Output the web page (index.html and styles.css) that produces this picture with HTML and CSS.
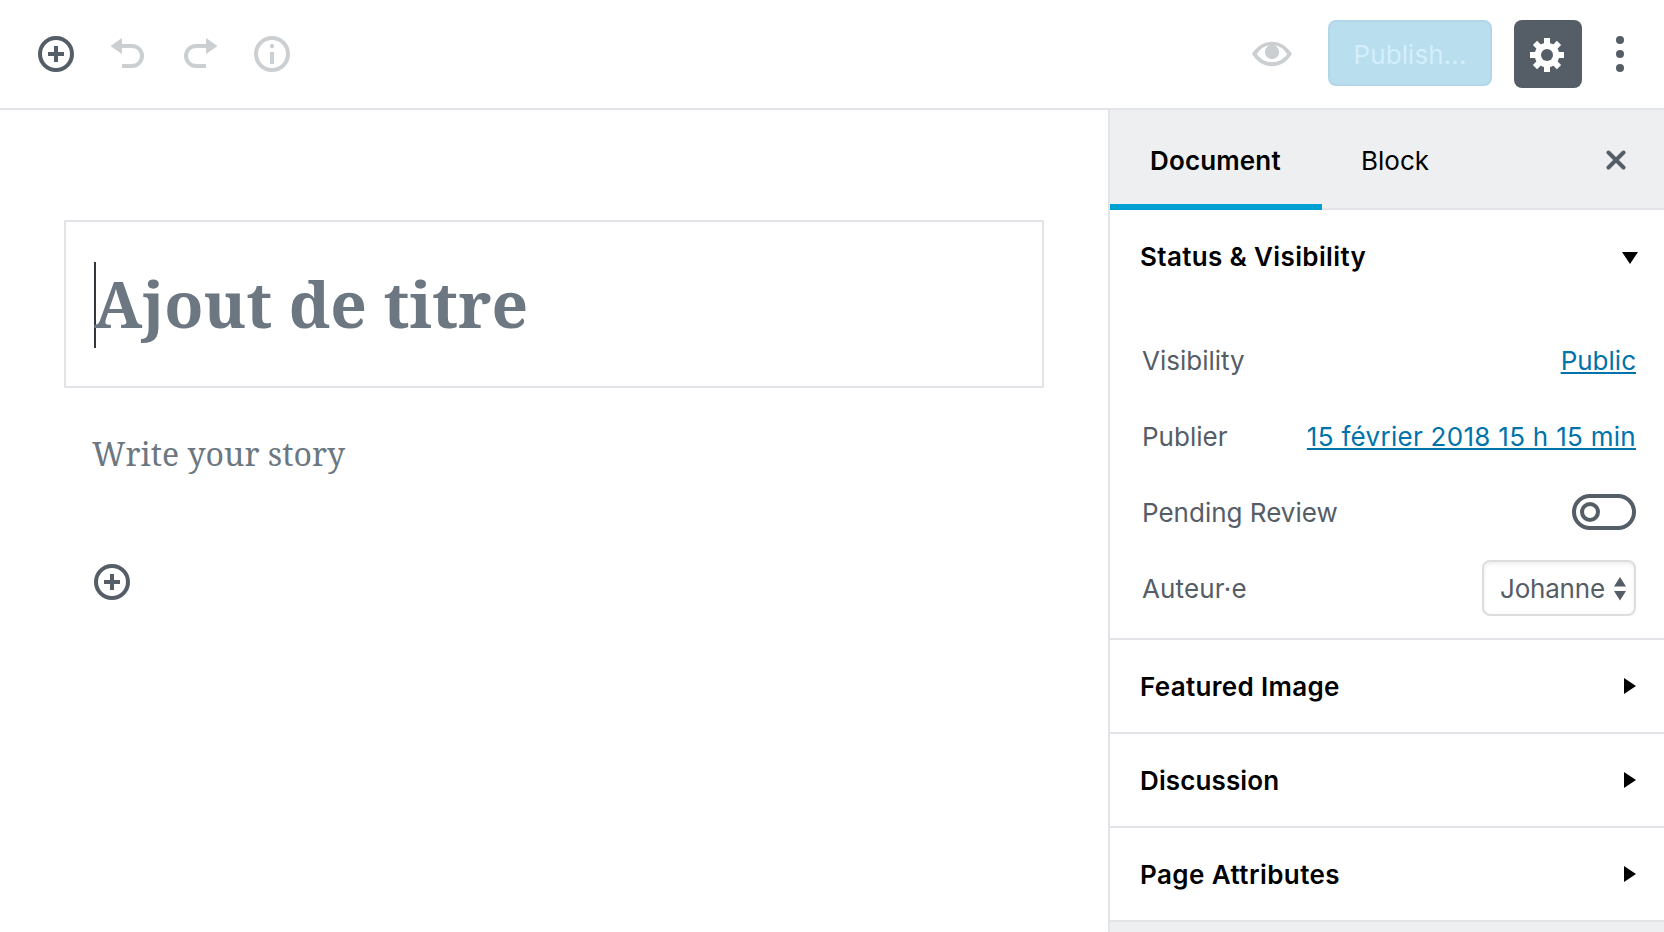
FILE: index.html
```html
<!DOCTYPE html>
<html lang="fr">
<head>
<meta charset="utf-8">
<title>Editor</title>
<link rel="stylesheet" href="styles.css">
</head>
<body>
<header class="header">
  <div class="tools">
    <svg class="icon dark" viewBox="0 0 40 40"><circle cx="20" cy="20" r="16" fill="none" stroke="currentColor" stroke-width="4"/><path d="M12 20h16M20 12v16" stroke="currentColor" stroke-width="4"/></svg>
    <svg class="icon" viewBox="0 0 40 40"><path d="M2.500 12L14 4v16z" fill="currentColor"/><path d="M13 12h11a10 10 0 0 1 0 20H14" fill="none" stroke="currentColor" stroke-width="4"/></svg>
    <svg class="icon" viewBox="0 0 40 40"><path d="M37.500 12L26 4v16z" fill="currentColor"/><path d="M27 12H16a10 10 0 0 0 0 20h10" fill="none" stroke="currentColor" stroke-width="4"/></svg>
    <svg class="icon" viewBox="0 0 40 40"><circle cx="20" cy="20" r="16" fill="none" stroke="currentColor" stroke-width="4"/><circle cx="20" cy="12" r="2.200" fill="currentColor"/><path d="M20 18v12" stroke="currentColor" stroke-width="4"/></svg>
  </div>
  <div class="actions">
    <svg class="icon" viewBox="0 0 40 40"><path fill="currentColor" fill-rule="evenodd" d="M0 20C10 3.700 30 3.700 40 20C30 36.300 10 36.300 0 20zM4.800 20C12 31 28 31 35.200 20C32 15.500 29 13 25 11.800H15C11 13 8 15.500 4.800 20z"/><circle cx="20" cy="18" r="7.200" fill="currentColor"/></svg>
    <button class="publish"><span class="t-publish">Publish...</span></button>
    <button class="settings"><svg class="gear" viewBox="-17 -17 34 34"><g fill="#fff"><path d="M-3-17h6v34h-6z"/><path d="M-3-17h6v34h-6z" transform="rotate(45)"/><path d="M-3-17h6v34h-6z" transform="rotate(90)"/><path d="M-3-17h6v34h-6z" transform="rotate(135)"/><circle r="12.300"/></g><circle r="6" fill="#555d66"/></svg></button>
    <svg class="more" viewBox="0 0 8 36"><circle cx="4" cy="4" r="4"/><circle cx="4" cy="18" r="4"/><circle cx="4" cy="32" r="4"/></svg>
  </div>
</header>
<div class="main">
  <main class="editor">
    <div class="title-box"><span class="caret"></span><h1 class="title">Ajout de titre</h1></div>
    <p class="story"><span class="t-story">Write your story</span></p>
    <svg class="icon dark inserter" viewBox="0 0 40 40"><circle cx="20" cy="20" r="16" fill="none" stroke="currentColor" stroke-width="4"/><path d="M12 20h16M20 12v16" stroke="currentColor" stroke-width="4"/></svg>
  </main>
  <aside class="sidebar">
    <nav class="tabs">
      <div class="tab active"><span class="t-document">Document</span></div>
      <div class="tab"><span class="t-block">Block</span></div>
      <svg class="close" viewBox="0 0 20 20"><path d="M2.500 2.500l15 15M17.500 2.500l-15 15" stroke="#555d66" stroke-width="4" stroke-linecap="round"/></svg>
    </nav>
    <section class="panel status">
      <h2 class="heading"><span class="t-status">Status &amp; Visibility</span><svg class="tri-down" viewBox="0 0 16 12"><path d="M0 0h16L8 12z"/></svg></h2>
      <div class="rows">
        <div class="row"><span class="t-visibility">Visibility</span><a class="link t-public">Public</a></div>
        <div class="row"><span class="t-publier">Publier</span><a class="link t-date">15 février 2018 15 h 15 min</a></div>
        <div class="row"><span class="t-pending">Pending Review</span><svg class="toggle" viewBox="0 0 64 36"><g fill="none" stroke="#555d66" stroke-width="4"><rect x="2" y="2" width="60" height="32" rx="16"/><circle cx="18" cy="18" r="8"/></g></svg></div>
        <div class="row"><span class="t-auteur">Auteur·e</span><div class="select"><span class="t-johanne">Johanne</span><svg class="updown" viewBox="0 0 12 24"><path d="M0 9.500h12L6 0zM0 14h12l-6 9.500z"/></svg></div></div>
      </div>
    </section>
    <section class="panel"><h2 class="heading"><span class="t-featured">Featured Image</span><svg class="tri-right" viewBox="0 0 12 16"><path d="M0 0v16l12-8z"/></svg></h2></section>
    <section class="panel"><h2 class="heading"><span class="t-discussion">Discussion</span><svg class="tri-right" viewBox="0 0 12 16"><path d="M0 0v16l12-8z"/></svg></h2></section>
    <section class="panel"><h2 class="heading"><span class="t-page">Page Attributes</span><svg class="tri-right" viewBox="0 0 12 16"><path d="M0 0v16l12-8z"/></svg></h2></section>
  </aside>
</div>
</body>
</html>
```
FILE: styles.css
```css
* { box-sizing: border-box; margin: 0; padding: 0; }
body { width: 1664px; height: 932px; overflow: hidden; display: flex; flex-direction: column; background: #fff; font: 26px/32px Inter, "Liberation Sans", sans-serif; color: #555d66; }
svg { display: block; flex: none; }
button { border: 0; font: inherit; }
span, a { white-space: nowrap; }
.header { height: 110px; flex: none; border-bottom: 2px solid #e2e4e7; display: flex; justify-content: space-between; align-items: flex-start; padding: 20px 40px 0 36px; }
.tools { display: flex; gap: 32px; padding-top: 14px; }
.icon { width: 40px; height: 40px; color: #cbcfd2; }
.dark { color: #555d66; }
.actions { display: flex; align-items: flex-start; }
.actions .icon { margin: 14px 36px 0 0; }
.publish { width: 164px; height: 66px; margin-right: 22px; padding-top: 4px; border: 2px solid #b3d7e8; border-radius: 8px; background: #b9deee; color: #d3effb; letter-spacing: .1px; }
.settings { display: flex; width: 68px; height: 68px; margin-right: 34px; border-radius: 8px; background: #555d66; padding: 18px 0 0 16px; }
.gear { width: 34px; height: 34px; }
.more { width: 8px; height: 36px; margin-top: 16px; fill: #555d66; }
.main { flex: 1; display: flex; min-height: 0; }
.editor { width: 1108px; padding: 110px 64px 0; font-family: "Noto Serif", "Droid Serif", "DejaVu Serif Condensed", "DejaVu Serif", serif; color: #6c7781; }
.title-box { height: 168px; border: 2px solid #e2e4e7; padding: 40px 28px; display: flex; }
.caret { width: 2px; height: 86px; margin-right: -2px; background: #32373c; }
.title { font-size: 64px; line-height: 84px; font-weight: 700; white-space: nowrap; }
.story { font-size: 32px; line-height: 44px; margin: 44px 0 0 28px; }
.inserter { margin: 86px 0 0 28px; }
.sidebar { width: 556px; border-left: 2px solid #e2e4e7; background: #edeff0; }
.tabs { height: 100px; border-bottom: 2px solid #e2e4e7; display: flex; color: #000; }
.tab { padding: 35px 39px 0; height: 100px; }
.active { width: 212px; padding-left: 40px; font-weight: 600; letter-spacing: .15px; border-bottom: 6px solid #00a0d2; }
.close { width: 20px; height: 20px; margin: 40px 38px 0 auto; }
.panel { background: #fff; border-bottom: 2px solid #e2e4e7; }
.heading { height: 92px; padding: 0 28px 0 30px; display: flex; align-items: center; justify-content: space-between; font-size: 26px; font-weight: 600; color: #000; }
.heading span { padding-top: 2px; }
.heading .t-status { padding-top: 0; letter-spacing: .36px; }
.t-featured { letter-spacing: .33px; }
.t-discussion { letter-spacing: .12px; }
.t-page { letter-spacing: .43px; }
.status { height: 430px; }
.status .heading { padding-right: 26px; height: 94px; }
.tri-down { width: 16px; height: 12px; margin-top: 2px; }
.tri-right { width: 12px; height: 16px; }
.rows { padding: 19px 28px 0 32px; }
.row { height: 76px; display: flex; align-items: center; justify-content: space-between; }
.link { color: #0073aa; text-decoration: underline; text-decoration-thickness: 2px; text-underline-offset: 2px; }
.t-date { letter-spacing: .29px; }
.t-auteur { letter-spacing: .15px; }
.t-johanne { letter-spacing: -.2px; }
.toggle { width: 64px; height: 36px; margin-bottom: 2px; }
.select { width: 154px; height: 56px; margin-bottom: 2px; border: 2px solid #ddd; border-radius: 8px; box-shadow: inset 0 2px 4px rgba(0,0,0,.07); padding: 2px 8px 0 16px; display: flex; align-items: center; justify-content: space-between; }
.updown { width: 12px; height: 24px; margin-bottom: 1px; fill: #555d66; }
```
